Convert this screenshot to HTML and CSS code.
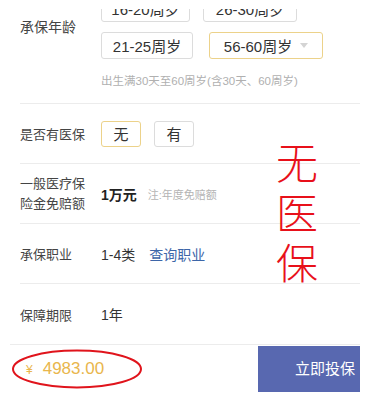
FILE: index.html
```html
<!DOCTYPE html>
<html lang="zh-CN">
<head>
<meta charset="UTF-8">
<meta name="viewport" content="width=device-width, initial-scale=1.0">
<title>投保信息</title>
<link rel="stylesheet" href="styles.css">
</head>
<body>
<div class="page">
  <div class="row row-age">
    <div class="label">承保年龄</div>
    <div class="field">
      <div class="opts">
        <span class="opt w89">16-20周岁</span>
        <span class="opt w94">26-30周岁</span>
      </div>
      <div class="opts">
        <span class="opt w92">21-25周岁</span>
        <span class="opt w114 on">56-60周岁 <i class="caret"></i></span>
      </div>
      <div class="hint">出生满30天至60周岁(含30天、60周岁)</div>
    </div>
  </div>
  <div class="row">
    <div class="label">是否有医保</div>
    <div class="field inline">
      <span class="opt small on">无</span>
      <span class="opt small">有</span>
    </div>
  </div>
  <div class="row">
    <div class="label two">一般医疗保<br>险金免赔额</div>
    <div class="field inline">
      <span class="val bold">1万元</span>
      <span class="note">注:年度免赔额</span>
    </div>
  </div>
  <div class="row">
    <div class="label">承保职业</div>
    <div class="field inline">
      <span class="val">1-4类</span>
      <a class="link">查询职业</a>
    </div>
  </div>
  <div class="row last">
    <div class="label">保障期限</div>
    <div class="field inline">
      <span class="val">1年</span>
    </div>
  </div>
  <div class="bar">
    <div class="price"><span class="yen">¥</span>4983.00</div>
    <div class="buy">立即投保</div>
    <svg class="ring" width="134" height="44" viewBox="0 0 134 44">
      <ellipse cx="66" cy="21" rx="64" ry="18.5" fill="none" stroke="#e0141c" stroke-width="2"/>
    </svg>
  </div>
  <div class="fade"></div>
  <div class="stamp">无<br>医<br>保</div>
</div>
</body>
</html>
```

FILE: styles.css
```css
body {
  margin: 0;
  background-color: #fff;
  font-family: "Liberation Sans", "Noto Sans CJK SC", sans-serif;
  color: #333;
}
.page {
  position: relative;
  width: 360px;
  height: 394px;
  overflow: hidden;
}
.row {
  display: flex;
  align-items: center;
  height: 59px;
  margin-left: 20px;
  border-bottom: 1px solid #ececec;
}
.row-age {
  height: 108px;
  margin-top: -5px;
  align-items: flex-start;
}
.row-age .label {
  margin-top: 21px;
  font-size: 14px;
}
.label {
  width: 81px;
  flex-shrink: 0;
  font-size: 13px;
  color: #444;
}
.label.two {
  line-height: 20px;
}
.field.inline {
  display: flex;
  align-items: center;
}
.opts {
  display: flex;
  margin-bottom: 10px;
}
.opt {
  box-sizing: border-box;
  display: inline-flex;
  align-items: center;
  justify-content: center;
  height: 27px;
  margin-right: 13px;
  border: 1px solid #dcdcdc;
  border-radius: 3px;
  font-size: 15px;
  color: #333;
}
.opt.on {
  border-color: #ecd28a;
}
.w89 { width: 89px; }
.w94 { width: 94px; }
.w92 { width: 92px; margin-right: 16px; }
.w114 { width: 114px; }
.opt.small {
  width: 40px;
  height: 26px;
}
.caret {
  display: inline-block;
  margin-left: 8px;
  border-left: 4px solid transparent;
  border-right: 4px solid transparent;
  border-top: 5px solid #d4d4d4;
}
.hint {
  margin-top: 13px;
  font-size: 11.5px;
  color: #b0b0b0;
}
.val {
  font-size: 14px;
  color: #333;
  margin-right: 14px;
}
.val.bold {
  font-weight: bold;
  color: #222;
  margin-right: 11px;
}
.note {
  font-size: 11px;
  color: #b4b4b4;
}
.link {
  font-size: 14px;
  color: #3d66a8;
}
.row.last {
  height: 60px;
  margin-left: 10px;
  padding-left: 10px;
}
.bar {
  position: relative;
  display: flex;
  align-items: center;
  height: 46px;
  margin-top: 1px;
}
.price {
  flex: 1;
  padding-left: 26px;
  font-size: 17px;
  color: #e9b64c;
}
.yen {
  font-size: 12px;
  margin-right: 10px;
}
.buy {
  width: 102px;
  height: 46px;
  box-sizing: border-box;
  padding-left: 37px;
  line-height: 46px;
  background-color: #5868b0;
  color: #fff;
  font-size: 15px;
  white-space: nowrap;
}
.ring {
  position: absolute;
  left: 11px;
  top: 2px;
}
.fade {
  position: absolute;
  left: 0;
  top: 0;
  width: 360px;
  height: 9px;
  background-color: #fff;
}
.stamp {
  position: absolute;
  left: 276px;
  top: 136px;
  font-family: "Noto Sans CJK SC", sans-serif;
  font-weight: 200;
  font-size: 42px;
  line-height: 50px;
  color: #e8101a;
}
```
